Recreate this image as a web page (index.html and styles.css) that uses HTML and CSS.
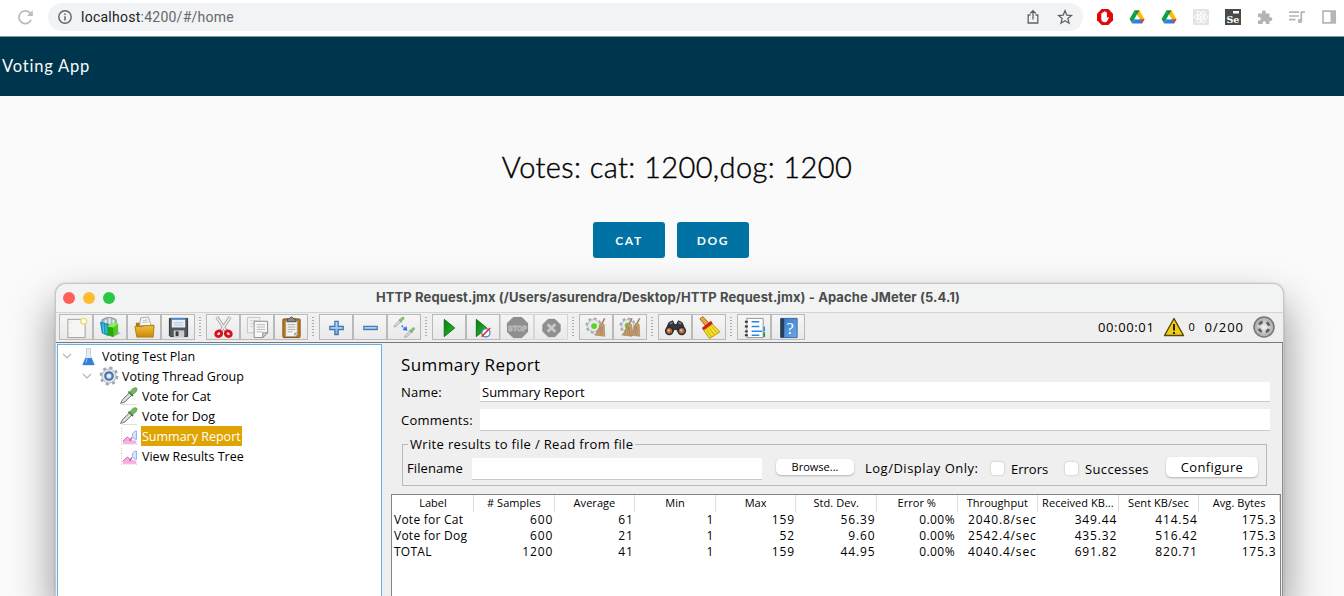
FILE: index.html
```html
<!DOCTYPE html>
<html lang="en">
<head>
<meta charset="utf-8">
<title>Voting App</title>
<link rel="stylesheet" href="styles.css">
</head>
<body>
<svg class="defs" width="0" height="0" aria-hidden="true">
  <defs>
    <linearGradient id="blueG" x1="0" y1="0" x2="0" y2="1"><stop offset="0" stop-color="#cfe2f5"/><stop offset="1" stop-color="#78a9dc"/></linearGradient>
    <linearGradient id="greenG" x1="0" y1="0" x2="1" y2="1"><stop offset="0" stop-color="#0b7a14"/><stop offset="1" stop-color="#22c02c"/></linearGradient>
    <linearGradient id="goldG" x1="0" y1="0" x2="0" y2="1"><stop offset="0" stop-color="#f0c040"/><stop offset="1" stop-color="#c98a08"/></linearGradient>
    <linearGradient id="bookG" x1="0" y1="0" x2="1" y2="1"><stop offset="0" stop-color="#3a78c4"/><stop offset="1" stop-color="#68a8ea"/></linearGradient>
    <radialGradient id="ballG"><stop offset="0" stop-color="#f4f4f4"/><stop offset="1" stop-color="#a8a8a8"/></radialGradient>
    <symbol id="dropper" viewBox="0 0 20 20">
      <path d="M3 18.500h15" stroke="#e0e0e0"/>
      <path d="M1.500 17.500 3.500 13.500l7-7 2.500 2.500-7 7z" fill="#c3ccc7" stroke="#727a76" stroke-width=".9"/>
      <path d="m4 15.500 7-7" stroke="#f6f8f7" stroke-width=".9"/>
      <path d="m9.500 5.500 4.500 4.500" stroke="#3d6b35" stroke-width="1.600"/>
      <path d="M11 6.500c1-3 4-5.500 6.500-4.500 1.500 2.500-1.500 5-4 6.500z" fill="#74b75e" stroke="#4f9440" stroke-width=".8"/>
    </symbol>
    <symbol id="chart" viewBox="0 0 20 20">
      <path d="M2.500 2v15M2 18.200h16" stroke="#c9c4c8" stroke-dasharray="1 1.500" fill="none"/>
      <path d="m4 15 4.500-4 3.500 3.500 5 .5v2.500H4z" fill="#f7b0e0" stroke="#f3a6da" stroke-width=".6"/>
      <path d="m4 15 4.500-4 3.500 3.500" stroke="#cf6bb2" fill="none"/>
      <path d="M17.500 5a4.200 4.200 0 1 0 0 8.400z" fill="#d3e4fc" stroke="#93b5ea"/>
      <path d="m13 11.500-2.500 3.500" stroke="#c85fa8" stroke-width="1.400"/>
    </symbol>
    <symbol id="drive" viewBox="0 0 16 16">
      <path d="M5.500 1.500h5L5.300 10.300 3 14.200.5 10z" fill="#0da14b"/>
      <path d="M5.500 1.500h5l5 8.700h-5z" fill="#fbbc04"/>
      <path d="M5.500 1.500h5L8 5.800z" fill="#1b8a3f"/>
      <path d="M5.300 10.200h10.200L13 14.400H3z" fill="#2f7de9"/>
      <path d="m11 10.200 2 4.200 2.500-4.200z" fill="#ea4335"/>
      <path d="m8 5.800 2.600 4.400H5.400z" fill="#fff"/>
    </symbol>
    <symbol id="gear" viewBox="0 0 20 20">
      <circle cx="10" cy="10" r="8" fill="none" stroke="#a2a8ae" stroke-width="2.800" stroke-dasharray="3.140 3.143"/>
      <circle cx="10" cy="10" r="7" fill="#e6e9ec" stroke="#b0b5bb"/>
    </symbol>
    <symbol id="broom" viewBox="0 0 14 24">
      <path d="m12.500 1.500-4 8" stroke="#a97b4a" stroke-width="1.700"/>
      <path d="m7.500 7.500 4.500 1 .500 13.500L1 20.500c3-3 5-7 6.500-13z" fill="#c8a172" stroke="#a67e50" stroke-width=".7"/>
      <path d="m8 10-4 11m5-10-2 10m3-10-.500 10" stroke="#94734a" stroke-width=".6"/>
    </symbol>
  </defs>
</svg>

<header class="browser">
  <svg class="reload" viewBox="0 0 16 16"><path d="M13.300 10.200A6 6 0 1 1 12.700 4.200L14 5.600" fill="none" stroke="#b9bbbe" stroke-width="1.600"/><path d="M14.800 1.200v5.300H9.500z" fill="#b9bbbe"/></svg>
  <div class="address">
    <svg class="info" viewBox="0 0 16 16"><circle cx="8" cy="8" r="6.200" fill="none" stroke="#5f6368" stroke-width="1.400"/><path d="M8 7.200V11.500M8 4.500V6" stroke="#5f6368" stroke-width="1.500"/></svg>
    <span class="url"><b>localhost</b>:4200/#/home</span>
    <svg class="share" viewBox="0 0 16 16"><path d="M5.500 6H3.200v8h9.600V6h-2.300M8 10.500V2M5.200 4.500 8 1.700l2.800 2.800" fill="none" stroke="#5f6368" stroke-width="1.300"/></svg>
    <svg class="star" viewBox="0 0 16 16"><path d="m8 1.800 1.800 4.300 4.700.4-3.600 3.100 1.100 4.600L8 11.700l-4 2.500 1.100-4.600L1.500 6.500l4.700-.4z" fill="none" stroke="#5f6368" stroke-width="1.300"/></svg>
  </div>
  <div class="exts">
    <svg viewBox="0 0 16 16"><path d="M4.700 0h6.600L16 4.700v6.600L11.300 16H4.700L0 11.300V4.700z" fill="#e2060f"/><path d="M4.300 8V4.500q.7-.8 1.300 0V3.300q.8-.8 1.400 0v-.700q.8-.8 1.500 0v.8q.8-.7 1.400 0V9l1-.8q1.100-.3 1 .5L10.200 12q-.8 1.300-2.300 1.300-3.300 0-3.600-3.300z" fill="#fff"/></svg>
    <svg viewBox="0 0 16 16"><use href="#drive"/></svg>
    <svg viewBox="0 0 16 16"><use href="#drive"/></svg>
    <svg viewBox="0 0 16 16"><rect width="16" height="16" rx="1" fill="#e4e4e4"/><g fill="none" stroke="#fff" stroke-width=".9"><ellipse cx="8" cy="8" rx="6.500" ry="2.500"/><ellipse cx="8" cy="8" rx="6.500" ry="2.500" transform="rotate(60 8 8)"/><ellipse cx="8" cy="8" rx="6.500" ry="2.500" transform="rotate(120 8 8)"/></g><circle cx="8" cy="8" r="1.300" fill="#fff"/></svg>
    <svg viewBox="0 0 16 16"><rect width="16" height="16" fill="#4a4a4a"/><rect x="8" y="2" width="6" height="2.500" fill="#fff"/><text x="1.500" y="14" class="se">Se</text></svg>
    <svg viewBox="0 0 16 16"><path d="M1 4.500h4V3.200a1.900 1.900 0 0 1 3.800 0v1.300h3.700v3.700h1a1.900 1.900 0 0 1 0 3.800h-1V15H9v-1a1.700 1.700 0 0 0-3.400 0v1H1v-3.500h1.200a1.700 1.700 0 0 0 0-3.400H1z" fill="#b4b4b4"/></svg>
    <svg viewBox="0 0 16 16"><path d="M0 3.200h10M0 7h10M0 10.700h6.500" stroke="#b6b6b6" stroke-width="1.700"/><path d="M12.300 12V3.200H16" fill="none" stroke="#b6b6b6" stroke-width="1.800"/><circle cx="11" cy="12" r="2.200" fill="#b6b6b6"/></svg>
    <svg viewBox="0 0 16 16"><path d="M2 2.200h12.200v11.600H2z" fill="#fff" stroke="#b6b6b6" stroke-width="1.700"/><path d="M9.500 2H15v12H9.500z" fill="#b6b6b6"/></svg>
  </div>
</header>

<nav class="appbar"><span>Voting App</span></nav>

<main class="page">
  <h1 class="votes">Votes: cat: 1200,dog: 1200</h1>
  <div class="actions"><button class="vote">CAT</button><button class="vote">DOG</button></div>
</main>

<section class="window">
  <div class="titlebar">
    <div class="lights"><i class="red"></i><i class="amber"></i><i class="green"></i></div>
    <div class="title">HTTP Request.jmx (/Users/asurendra/Desktop/HTTP Request.jmx) - Apache JMeter (5.4.1)</div>
  </div>
  <div class="toolbar">
    <div class="group">
      <div class="tool"><svg viewBox="0 0 24 24"><rect x="3" y="3.500" width="18" height="19" fill="#f6f6f5" stroke="#a0a09c"/><path d="M6 6v13" stroke="#ccc" stroke-dasharray="1 5"/><circle cx="19.500" cy="5.500" r="3" fill="#fff" stroke="#ecdf65" stroke-width="1.500"/></svg></div>
      <div class="tool"><svg viewBox="0 0 24 24"><path d="M3 4q8-5 15 0v6H3z" fill="#a8b8c2" stroke="#82939c"/><path d="M7 8V4m4 4V2m4 6V4" stroke="#e4edf0" stroke-width="2"/><path d="m1 6 9 2v13l-7-3z" fill="#1591be"/><path d="m4 8 1 10m2-9 .5 9" stroke="#6bd0ed"/><path d="m9 11 5-4 6 1v10l-5 4-6-2z" fill="#4ece25"/><path d="m9 11 6 1v10l-6-2z" fill="#26a812"/><path d="m9 11 5-4 6 1-5 4z" fill="#98eb52"/><path d="m19 16 4 2-7 3z" fill="#999" opacity=".6"/></svg></div>
      <div class="tool"><svg viewBox="0 0 24 24"><path d="M3 7h6l2 2h11v4H3z" fill="#ad7609"/><path d="m8 2 8-1 3 9H7z" fill="#f6f6f6" stroke="#aaa"/><path d="m10 5 5-1m-5 3 6-1" stroke="#bbb"/><path d="M2 11h8l2-1h10l-1 12H4z" fill="url(#goldG)" stroke="#b87e08"/></svg></div>
      <div class="tool"><svg viewBox="0 0 24 24"><path d="M2.500 2.500h19v19h-18l-1-1z" fill="#53565c" stroke="#303338"/><path d="M5 2h14v10H5z" fill="#e6effa"/><path d="M5 2h14v2H5z" fill="#4d83cc"/><path d="M7 7h10M7 9.500h10" stroke="#afc2d8"/><path d="M7 15h11v7H7z" fill="#cdcdcd"/><path d="M9 16h3v5H9z" fill="#3b3e42"/></svg></div>
    </div><i class="grip"></i>
    <div class="group">
      <div class="tool"><svg viewBox="0 0 24 24"><path d="m5 1 10 15M19 1 9 16" stroke="#999" stroke-width="3.300"/><path d="m5 1 10 15M19 1 9 16" stroke="#eee" stroke-width="1.700"/><ellipse cx="7" cy="18.500" rx="3.200" ry="2.800" fill="none" stroke="#d9101a" stroke-width="3" transform="rotate(-30 7 18.500)"/><ellipse cx="17" cy="18.500" rx="3.200" ry="2.800" fill="none" stroke="#d9101a" stroke-width="3" transform="rotate(30 17 18.500)"/></svg></div>
      <div class="tool"><svg viewBox="0 0 24 24"><path d="M1.500 1.500h13v16h-13z" fill="#f2f2f2" stroke="#c4c4c4"/><path d="M4 5h8M4 8h5M4 11h4" stroke="#ccc"/><path d="M8.500 5.500h14v12l-5 5h-9z" fill="#f7f7f5" stroke="#8b8b88"/><path d="M11 9h9m-9 2.500h9M11 14h9m-9 2.500h6" stroke="#bbb"/><path d="M17.500 22.500v-5h5z" fill="#ddd" stroke="#888"/></svg></div>
      <div class="tool"><svg viewBox="0 0 24 24"><rect x="3" y="3" width="18" height="19.500" rx="1" fill="#b9791b" stroke="#7e4d0c"/><path d="M6 5.500h12v14l-2 2H6z" fill="#f4f4f4" stroke="#999" stroke-width=".7"/><path d="M8 9h8m-8 2.500h8M8 14h8m-8 2.500h5" stroke="#aaa"/><path d="M7.500 6V3h2q2.500-4 5 0h2v3z" fill="#888" stroke="#4f4f4f"/><path d="m15 21.500 3-4h-3z" fill="#999"/></svg></div>
    </div><i class="grip"></i>
    <div class="group">
      <div class="tool"><svg viewBox="0 0 24 24"><path d="M10.300 5.500h3.400v5.300H19v3.400h-5.300v5.300h-3.400v-5.300H5v-3.400h5.300z" fill="url(#blueG)" stroke="#3d74b5" stroke-width="1.300"/></svg></div>
      <div class="tool"><svg viewBox="0 0 24 24"><rect x="5" y="10.800" width="14" height="3.400" fill="url(#blueG)" stroke="#3d74b5" stroke-width="1.200"/></svg></div>
      <div class="tool"><svg viewBox="0 0 24 24"><g opacity=".8"><use href="#dropper" x="0" y="0" width="13" height="13"/><use href="#dropper" x="11" y="11" width="13" height="13"/></g><path d="m9 10 4 4" stroke="#2877ee" stroke-width="1.500" stroke-dasharray="2 1"/><path d="m14 10.500 1 5-5-1z" fill="#2877ee"/></svg></div>
    </div><i class="grip"></i>
    <div class="group">
      <div class="tool"><svg viewBox="0 0 24 24"><path d="m6.500 3.500 11 9-11 9z" fill="url(#greenG)" stroke="#087512"/></svg></div>
      <div class="tool"><svg viewBox="0 0 24 24"><path d="m4.500 3.500 11 9-11 9z" fill="url(#greenG)" stroke="#087512"/><circle cx="14.500" cy="17.500" r="4.300" fill="#fff" fill-opacity=".8" stroke="#4b83cc" stroke-width="1.300"/><path d="m10 21.500 9-9" stroke="#dc332b" stroke-width="1.600"/></svg></div>
      <div class="tool off"><svg viewBox="0 0 24 24"><path d="M7.500 1.500h9l6 6v9l-6 6h-9l-6-6v-9z" fill="#8f8f8f" stroke="#868686"/><text x="2" y="15.300" class="stop" textLength="20" lengthAdjust="spacingAndGlyphs">STOP</text></svg></div>
      <div class="tool off"><svg viewBox="0 0 24 24"><path d="M8.500 3.500h7l5.500 5.500v7l-5.500 5.500h-7L3 16V9z" fill="#8f8f8f" stroke="#868686"/><path d="m8 8.500 8 8m0-8-8 8" stroke="#c8c8c8" stroke-width="3"/></svg></div>
    </div><i class="grip"></i>
    <div class="group">
      <div class="tool"><svg viewBox="0 0 24 24"><use href="#gear" x="0" y="1" width="18" height="18"/><circle cx="9.500" cy="10.500" r="3" fill="#5ed31c"/><use href="#broom" x="9" y="1" width="13" height="22"/></svg></div>
      <div class="tool"><svg viewBox="0 0 24 24"><use href="#gear" x="0" y="1" width="18" height="18"/><circle cx="9" cy="10" r="3" fill="#5ed31c"/><use href="#broom" x="2" y="1" width="13" height="22"/><use href="#broom" x="10" y="1" width="13" height="22"/></svg></div>
    </div><i class="grip"></i>
    <div class="group">
      <div class="tool"><svg viewBox="0 0 24 24"><path d="m5 7 4-2 2 4h2l2-4 4 2 3 8-6 3-3-4h-2l-3 4-6-3z" fill="#33363a" stroke="#222"/><path d="m6 8 3-1m6 0 3 1" stroke="#8b9095" stroke-width="1.400"/><circle cx="5.500" cy="15.500" r="3.800" fill="#b9653d" stroke="#292c30" stroke-width="1.500"/><circle cx="18.500" cy="15.500" r="3.800" fill="#b9653d" stroke="#292c30" stroke-width="1.500"/><circle cx="5" cy="15" r="1.200" fill="#d8d1cb"/><circle cx="18" cy="15" r="1.200" fill="#d8d1cb"/></svg></div>
      <div class="tool"><svg viewBox="0 0 24 24"><path d="m2 3 3-2.500 6.500 7-3.500 3z" fill="#e8a43e" stroke="#a76813"/><path d="m4 12.500 9.500-7.500 2 3-9.500 7z" fill="#d31b18"/><path d="m6 15 9-6.500 8 8L12 23.500z" fill="#f5dc28" stroke="#ba970b"/><path d="m9 14 5 8m-2.500-10 5.500 8m-3-9.500 6 7" stroke="#c8a50e" stroke-width=".8"/></svg></div>
    </div><i class="grip"></i>
    <div class="group">
      <div class="tool"><svg viewBox="0 0 24 24"><path d="M19 11h4v5h-4z" fill="#2994ee"/><path d="M19 17h4v5h-4z" fill="#139332"/><path d="M4 2.500h17v20H4z" fill="#fdfdfd" stroke="#929292"/><path d="M9 6h8M9 11h8m-8 5h11M9 20h8" stroke="#2987ec" stroke-width="1.500"/><path d="M2 6h4m-4 5h4m-4 5h4m-4 4h4" stroke="#333" stroke-width="2" stroke-dasharray="3 1"/></svg></div>
      <div class="tool"><svg viewBox="0 0 24 24"><path d="M4 2.500h17v20H4z" fill="url(#bookG)" stroke="#3767a1"/><path d="M3.500 2.500h4v20h-4z" fill="#273e5a"/><text x="10" y="19" class="q">?</text></svg></div>
    </div>
    <div class="status">
      <span class="time">00:00:01</span>
      <svg class="warn" viewBox="0 0 22 20"><path d="m11 1.500 9.500 17h-19z" fill="#f2cb13" stroke="#55480d" stroke-width="1.400" stroke-linejoin="round"/><path d="M11 7v6.500M11 15v2" stroke="#292408" stroke-width="2"/></svg>
      <span class="errs">0</span><span class="threads">0/200</span>
      <svg class="ball" viewBox="0 0 22 22"><circle cx="11" cy="11" r="10" fill="url(#ballG)" stroke="#777" stroke-width="1.500"/><circle cx="11" cy="11" r="5.300" fill="none" stroke="#606060" stroke-width="2.800" stroke-dasharray="4.160 4.160" stroke-dashoffset="-2.080"/></svg>
    </div>
  </div>
  <div class="content">
    <aside class="tree">
      <div class="node"><svg class="chev" viewBox="0 0 10 10"><path d="m1 3 4 4 4-4" fill="none" stroke="#b5b5b5" stroke-width="1.200"/></svg><svg class="ico" viewBox="0 0 20 20"><path d="M7.500 2.500h4v7l4 9.500h-12l4-9.500z" fill="#e4edf6" stroke="#bdc8d4" stroke-width=".8"/><path d="M6.500 12h6l3 7h-12z" fill="#2f80d8"/><path d="m8 12.500-1 4" stroke="#9fcbf4"/></svg><span>Voting Test Plan</span></div>
      <div class="node l1"><svg class="chev" viewBox="0 0 10 10"><path d="m1 3 4 4 4-4" fill="none" stroke="#b5b5b5" stroke-width="1.200"/></svg><svg class="ico" viewBox="0 0 20 20"><use href="#gear"/><circle cx="10" cy="10" r="3.700" fill="#dfeafb" stroke="#4a74b2" stroke-width="2.300"/></svg><span>Voting Thread Group</span></div>
      <div class="node l2"><svg class="ico" viewBox="0 0 20 20"><use href="#dropper"/></svg><span>Vote for Cat</span></div>
      <div class="node l2"><svg class="ico" viewBox="0 0 20 20"><use href="#dropper"/></svg><span>Vote for Dog</span></div>
      <div class="node l2 selected"><svg class="ico" viewBox="0 0 20 20"><use href="#chart"/></svg><span>Summary Report</span></div>
      <div class="node l2"><svg class="ico" viewBox="0 0 20 20"><use href="#chart"/></svg><span>View Results Tree</span></div>
    </aside>
    <div class="report">
      <h2>Summary Report</h2>
      <div class="field name"><label>Name:</label><div class="input"><span>Summary Report</span></div></div>
      <div class="field comments"><label>Comments:</label><div class="input"></div></div>
      <fieldset class="file">
        <legend>Write results to file / Read from file</legend>
        <label class="fn">Filename</label><div class="input fninput"></div>
        <button class="browse">Browse...</button>
        <span class="log">Log/Display Only:</span>
        <i class="check"></i><span class="errors">Errors</span>
        <i class="check"></i><span class="succ">Successes</span>
        <button class="configure">Configure</button>
      </fieldset>
      <div class="tablebox">
        <table>
          <thead><tr><th>Label</th><th># Samples</th><th>Average</th><th>Min</th><th>Max</th><th>Std. Dev.</th><th>Error %</th><th>Throughput</th><th>Received KB...</th><th>Sent KB/sec</th><th>Avg. Bytes</th></tr></thead>
          <tbody>
            <tr><td>Vote for Cat</td><td>600</td><td>61</td><td>1</td><td>159</td><td>56.39</td><td>0.00%</td><td>2040.8/sec</td><td>349.44</td><td>414.54</td><td>175.3</td></tr>
            <tr><td>Vote for Dog</td><td>600</td><td>21</td><td>1</td><td>52</td><td>9.60</td><td>0.00%</td><td>2542.4/sec</td><td>435.32</td><td>516.42</td><td>175.3</td></tr>
            <tr><td>TOTAL</td><td>1200</td><td>41</td><td>1</td><td>159</td><td>44.95</td><td>0.00%</td><td>4040.4/sec</td><td>691.82</td><td>820.71</td><td>175.3</td></tr>
          </tbody>
        </table>
      </div>
    </div>
  </div>
</section>
</body>
</html>
```
FILE: styles.css
```css
* { box-sizing: border-box; }
html, body { margin: 0; height: 596px; overflow: hidden; }
body { position: relative; background: #fafafa; font-family: "Open Sans", "Noto Sans", sans-serif; color: #000; }
.defs { position: absolute; }
svg { display: block; flex: none; }
i { display: block; }

.browser { height: 37px; display: flex; align-items: flex-start; background: #fff; border-bottom: 1px solid #7f99a5; padding-left: 17px; }
.reload { width: 17px; height: 17px; margin-top: 9px; }
.address { width: 1035px; height: 28px; margin: 3px 0 0 14px; border-radius: 14px; background: #f1f3f4; display: flex; align-items: center; padding: 0 10px 0 9px; }
.info { width: 16px; height: 16px; }
.url { flex: 1; margin-left: 8px; font: 14px/28px Roboto, sans-serif; letter-spacing: .25px; color: #65686c; }
.url b { font-weight: 400; color: #202124; }
.share, .star { width: 16px; height: 16px; }
.share { margin-right: 16px; }
.exts { display: flex; gap: 16px; margin: 9px 0 0 14px; }
.exts svg { width: 16px; height: 16px; }
.se { font: bold 9.500px "DejaVu Serif", serif; fill: #fff; }

.appbar { height: 59px; background: #00364d; color: #fafafa; display: flex; align-items: center; padding: 0 0 2px 2px; font: 16.500px/24px Lato, sans-serif; letter-spacing: .8px; }
.page { display: flex; flex-direction: column; align-items: center; padding-top: 50px; }
.votes { margin: 0 0 0 10px; font: 300 29px/42px Lato, sans-serif; letter-spacing: .4px; white-space: nowrap; -webkit-text-stroke: .4px #000; }
.actions { display: flex; gap: 12px; margin-top: 34px; margin-right: 2px; }
.vote { width: 72px; height: 36px; border: 0; border-radius: 3px; background: #0072a3; color: #fafafa; font: bold 12px/36px Lato, sans-serif; letter-spacing: 1.650px; padding: 1px 0 0; }

.window { position: absolute; left: 55px; top: 283px; width: 1229px; height: 313px; border: 1px solid #c6c6c6; border-bottom: 0; border-radius: 11px 11px 0 0; background: #efefef; box-shadow: 0 22px 42px 2px rgba(0,0,0,.4), 0 0 2px rgba(0,0,0,.2); }
.titlebar { height: 29px; display: grid; grid-template-columns: 320px 1fr; align-items: center; background: #f2f4f3; border-bottom: 1px solid #d4d4d4; border-radius: 10px 10px 0 0; }
.lights { display: flex; gap: 8px; padding-left: 7px; }
.lights i { width: 12px; height: 12px; border-radius: 50%; }
.red { background: #fe5f57; }
.amber { background: #febc2e; }
.green { background: #28c840; }
.title { font: bold 13px/20px Inter, sans-serif; letter-spacing: .1px; color: #4b4c4b; white-space: nowrap; padding-bottom: 2px; }

.toolbar { height: 30px; display: flex; align-items: center; padding: 0 0 1px 3px; border-bottom: 1px solid #787878; }
.group { display: flex; }
.tool { width: 34px; height: 26px; border: 1px solid #b9b9b9; background: linear-gradient(#f5f5f5, #e9e9e9); display: flex; justify-content: center; align-items: center; }
.tool svg { width: 23px; height: 23px; }
.off { border-color: #d6d6d6; }
.grip { width: 2px; height: 20px; margin: 0 5px 0 4px; background: repeating-linear-gradient(#aaa 0 1px, transparent 1px 3px); }
.stop { font: bold 8px "Liberation Sans", sans-serif; fill: none; stroke: #bebebe; stroke-width: .8px; }
.q { font: 17px "Liberation Serif", serif; fill: #fff; }
.status { margin-left: auto; padding-right: 8px; display: flex; align-items: center; font-size: 13px; line-height: 20px; letter-spacing: .65px; }
.warn { width: 22px; height: 20px; margin-left: 8px; }
.errs { font-size: 11px; margin-left: 4px; }
.threads { margin-left: 9px; letter-spacing: 1px; }
.ball { width: 22px; height: 22px; margin-left: 9px; }

.content { display: flex; height: 253px; }
.tree { width: 325px; height: 252px; margin: 1px 1px 0 1px; padding-top: 1px; background: #fff; border: 1px solid #63b1ec; border-bottom: 0; font-size: 12.500px; letter-spacing: 0; }
.node { height: 20px; display: flex; align-items: center; padding-left: 4px; white-space: nowrap; }
.l1 { padding-left: 24px; }
.l2 { padding-left: 61px; }
.chev { width: 10px; height: 10px; margin-right: 7px; }
.ico { width: 20px; height: 20px; }
.node span { height: 20px; line-height: 22px; margin-left: 2px; padding: 0 1px; }
.selected span { background: #dfa400; color: #fff; }

.report { flex: 1; min-width: 0; border-right: 1px solid #8d8d8d; }
.report h2 { margin: 10px 0 0 18px; font-weight: 400; font-size: 17px; line-height: 24px; letter-spacing: .38px; }
.field { display: flex; align-items: center; margin-left: 18px; font-size: 13px; }
.field label { width: 79px; letter-spacing: .25px; }
.input { background: #fff; border-bottom: 1px solid #c9c9c9; }
.name { margin-top: 5px; height: 20px; }
.name .input { width: 790px; height: 20px; line-height: 20px; padding-left: 2px; }
.comments { margin-top: 7px; height: 22px; }
.comments .input { width: 790px; height: 22px; }
.file { margin: 5px 0 0 19px; padding: 0 0 0 4px; width: 865px; height: 50px; min-width: 0; border: 1px solid #b9b9b9; display: flex; align-items: flex-start; font-size: 13px; line-height: 20px; white-space: nowrap; }
.file legend { margin-left: 1px; padding: 0 2px; line-height: 16px; letter-spacing: .33px; }
.fn { width: 65px; margin-top: 6px; letter-spacing: .1px; }
.fninput { width: 290px; height: 22px; margin-top: 6px; }
.browse, .configure { border: 0; border-radius: 5px; background: #fff; box-shadow: 0 1px 2px rgba(0,0,0,.25); padding: 0; font-family: inherit; color: #000; }
.browse { width: 78px; height: 16px; margin: 7px 0 0 14px; font-size: 11px; line-height: 16px; }
.log { margin: 6px 0 0 11px; width: 126px; letter-spacing: .5px; }
.check { width: 13px; height: 13px; border-radius: 3px; background: #fff; box-shadow: 0 0 2px rgba(0,0,0,.3); margin-top: 10px; }
.errors { margin: 7px 0 0 7px; width: 54px; }
.succ { margin: 7px 0 0 7px; width: 81px; letter-spacing: .35px; }
.configure { width: 92px; height: 20px; margin-top: 5px; font-size: 13px; line-height: 20px; letter-spacing: .35px; }
.tablebox { margin: 8px 0 0 8px; width: 890px; height: 102px; background: #fff; border: 1px solid #858585; border-bottom: 0; padding-left: 1px; }
table { width: 887px; table-layout: fixed; border-collapse: collapse; }
th { height: 17px; padding: 0 0 2px; font-weight: 400; font-size: 11px; line-height: 15px; letter-spacing: .05px; border-right: 1px solid #dedede; white-space: nowrap; }
td { height: 16px; padding: 0 1px 0 0; font-size: 12px; line-height: 16px; text-align: right; white-space: nowrap; letter-spacing: .85px; }
td:nth-child(7) { letter-spacing: .45px; padding-right: 2px; }
td:last-child { padding-right: 3px; }
td:first-child { text-align: left; padding-left: 1px; letter-spacing: .25px; }
```
